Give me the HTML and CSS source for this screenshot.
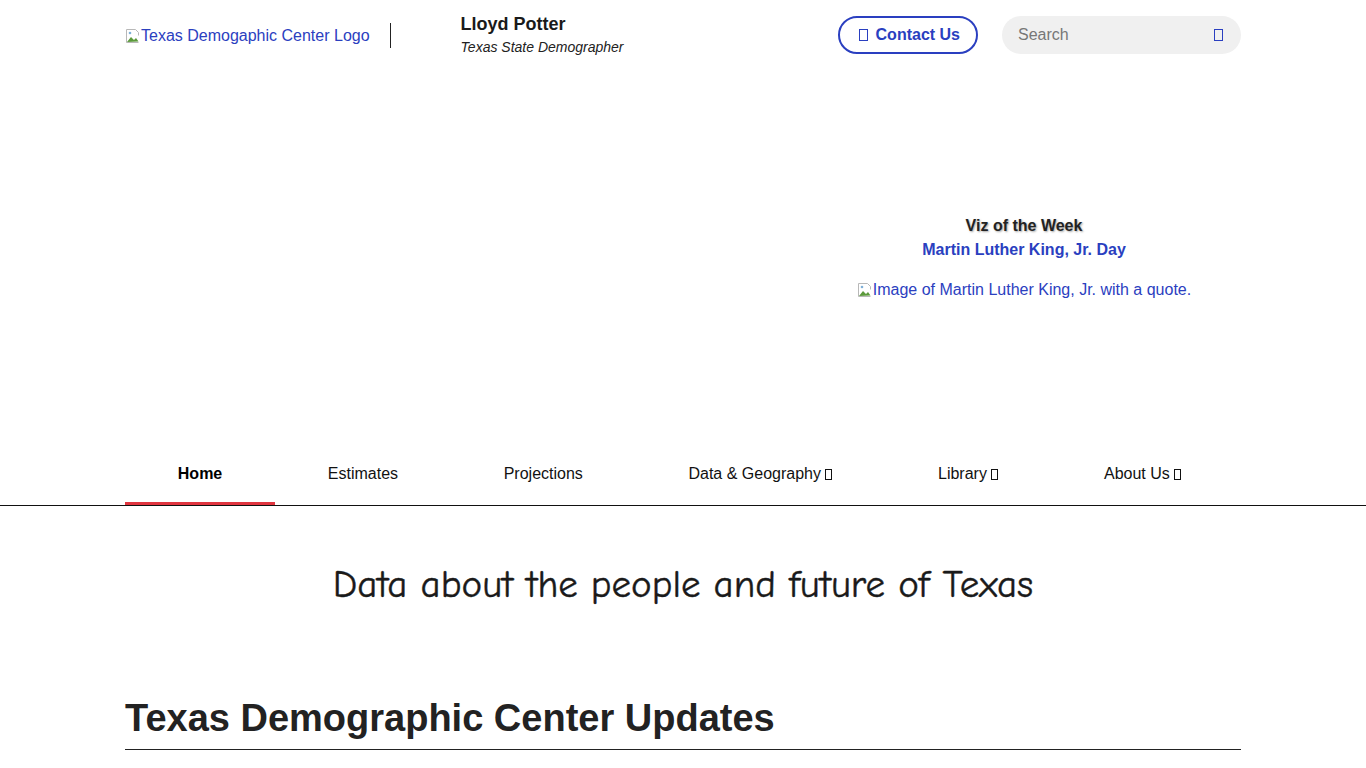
FILE: index.html
```html
<!DOCTYPE html>
<html lang="en">
<head>
<meta charset="utf-8">
<title>Texas Demographic Center</title>
<link rel="stylesheet" href="styles.css">
</head>
<body>
<header class="topbar">
  <div class="container topbar-inner">
    <div class="brand">
      <a class="logo" href="#"><svg class="broken" width="16" height="16" viewBox="0 0 16 16"><path d="M1.5 1.5h9l3 3v3" fill="none" stroke="#b8b8b8"/><path d="M1.5 1.5v13h12" fill="none" stroke="#b8b8b8"/><path d="M2 14l4-5 3 3 2-2 2.5 3.5z" fill="#5c9a3c"/><circle cx="5" cy="5" r="1.3" fill="#7fb0d8"/></svg>Texas Demogaphic Center Logo</a>
      <span class="divider"></span>
      <div class="person">
        <div class="name">Lloyd Potter</div>
        <div class="title">Texas State Demographer</div>
      </div>
    </div>
    <div class="actions">
      <a class="contact" href="#"><span class="tofu"></span>Contact Us</a>
      <div class="search">
        <span class="placeholder">Search</span>
        <span class="tofu tofu-blue"></span>
      </div>
    </div>
  </div>
</header>

<section class="hero">
  <div class="container hero-grid">
    <div class="hero-left"></div>
    <div class="viz">
      <div class="viz-label">Viz of the Week</div>
      <a class="viz-title" href="#">Martin Luther King, Jr. Day</a>
      <a class="viz-img" href="#"><svg class="broken" width="16" height="16" viewBox="0 0 16 16"><path d="M1.5 1.5h9l3 3v3" fill="none" stroke="#b8b8b8"/><path d="M1.5 1.5v13h12" fill="none" stroke="#b8b8b8"/><path d="M2 14l4-5 3 3 2-2 2.5 3.5z" fill="#5c9a3c"/><circle cx="5" cy="5" r="1.3" fill="#7fb0d8"/></svg>Image of Martin Luther King, Jr. with a quote.</a>
    </div>
  </div>
</section>

<nav class="mainnav">
  <ul class="container nav-list">
    <li class="nav-item active">Home</li>
    <li class="nav-item">Estimates</li>
    <li class="nav-item">Projections</li>
    <li class="nav-item">Data &amp; Geography <span class="tofu tofu-sm"></span></li>
    <li class="nav-item">Library <span class="tofu tofu-sm"></span></li>
    <li class="nav-item">About Us <span class="tofu tofu-sm"></span></li>
  </ul>
</nav>

<main class="container">
  <p class="tagline">Data about the people and future of Texas</p>
  <h2 class="updates">Texas Demographic Center Updates</h2>
</main>
</body>
</html>
```
FILE: styles.css
```css
* { box-sizing: border-box; }
html, body { margin: 0; padding: 0; background: #fff; }
body {
  font-family: "Liberation Sans", Arial, sans-serif;
  font-size: 16px;
  color: #222;
  overflow: hidden;
}
a { text-decoration: none; }
.container {
  width: 1116px;
  margin: 0 auto;
}
.topbar-inner {
  display: flex;
  justify-content: space-between;
  align-items: flex-start;
  padding-top: 14px;
  height: 70px;
}
.brand { display: flex; align-items: flex-start; }
.logo {
  color: #2b40bf;
  font-size: 16px;
  display: flex;
  align-items: center;
  height: 20px;
  margin-top: 12px;
}
.broken { margin-right: 0; vertical-align: middle; }
.divider {
  width: 1px;
  height: 25px;
  background: #222;
  margin: 9px 0 0 20px;
}
.person { margin-left: 70px; }
.name { font-weight: bold; font-size: 18px; line-height: 20px; color: #1a1a1a; }
.title { font-style: italic; font-size: 14px; line-height: 16px; margin-top: 5px; color: #222; }
.actions { display: flex; align-items: center; gap: 24px; padding-top: 2px; }
.contact {
  display: flex;
  align-items: center;
  height: 38px;
  padding: 0 16px 0 19px;
  border: 2px solid #2a3fc0;
  border-radius: 20px;
  color: #2a3fc0;
  font-weight: bold;
  font-size: 16px;
}
.tofu {
  display: inline-block;
  width: 9px;
  height: 12px;
  border: 1px solid currentColor;
  margin-right: 8px;
}
.tofu-blue { color: #2a3fc0; margin: 0; }
.tofu-sm { width: 7px; height: 11px; margin: 0; vertical-align: -1px; }
.search {
  width: 239px;
  height: 38px;
  background: #f0f0f0;
  border-radius: 19px;
  display: flex;
  align-items: center;
  justify-content: space-between;
  padding: 0 18px 0 16px;
}
.placeholder { color: #777; font-size: 16px; }

.hero { height: 374px; }
.hero-grid {
  display: grid;
  grid-template-columns: 1fr 434px;
  height: 100%;
  align-items: center;
}
.viz {
  display: flex;
  flex-direction: column;
  align-items: center;
  text-align: center;
  padding-top: 2px;
}
.viz-label {
  font-weight: bold;
  font-size: 16px;
  line-height: 20px;
  color: #222;
  text-shadow: 1px 1px 2px rgba(0,0,0,0.35);
}
.viz-title {
  font-weight: bold;
  color: #2a3fc0;
  line-height: 20px;
  margin-top: 4px;
}
.viz-img {
  color: #2b40bf;
  display: flex;
  align-items: center;
  margin-top: 20px;
  line-height: 20px;
}

.mainnav { border-bottom: 1px solid #111; }
.nav-list {
  list-style: none;
  padding: 0;
  margin: 0 auto;
  display: flex;
  justify-content: flex-start;
}
.nav-item {
  padding: 19px 52.8px 17px;
  font-size: 16px;
  line-height: 22px;
  color: #111;
  border-bottom: 3px solid transparent;
  white-space: nowrap;
}
.nav-item.active { font-weight: bold; border-bottom-color: #e0353f; color: #000; }

.tagline {
  font-family: "Comic Sans MS", "Comic Neue", "DejaVu Sans", cursive;
  font-size: 39px;
  text-align: center;
  color: #1a1a1a;
  margin: 56px 0 0;
  line-height: 46px;
  -webkit-text-stroke: 0.4px #1a1a1a;
}
.updates {
  font-size: 38px;
  font-weight: bold;
  margin: 88px 0 0;
  padding-bottom: 9px;
  line-height: 44px;
  border-bottom: 1px solid #222;
  color: #222;
}
```
